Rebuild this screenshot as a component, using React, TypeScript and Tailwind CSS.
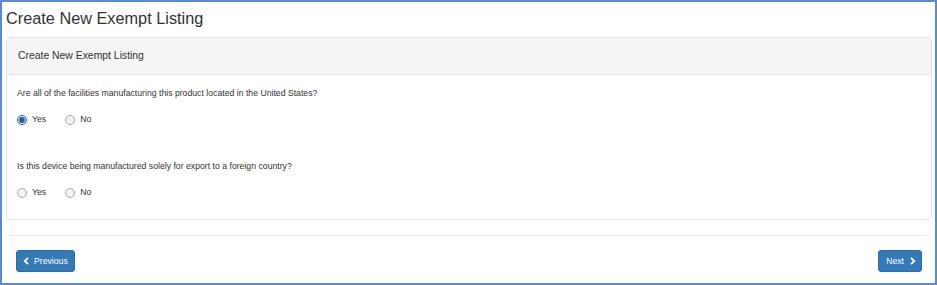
import React, { useState } from 'react';

const font = { fontFamily: '"Liberation Sans", Arial, sans-serif' };

function Radio({ checked, label, onClick }: { checked: boolean; label: string; onClick: () => void }) {
  return (
    <label className="flex items-center gap-[5px] cursor-pointer" onClick={onClick}>
      <span
        className={`flex h-[10px] w-[10px] items-center justify-center rounded-full border ${
          checked ? 'border-[#2f5f9a] bg-[#dfe9f5]' : 'border-[#a8a8a8] bg-[#f2f2f2]'
        }`}
      >
        {checked && <span className="h-[6px] w-[6px] rounded-full bg-[#2e5f9e]" />}
      </span>
      <span className="text-[8.7px] text-[#333]">{label}</span>
    </label>
  );
}

function Question({
  text,
  value,
  onChange,
}: {
  text: string;
  value: string | null;
  onChange: (v: string) => void;
}) {
  return (
    <div>
      <p className="text-[8.7px] leading-[12px] text-[#333]">{text}</p>
      <div className="mt-[14px] flex items-center gap-[19px]">
        <Radio checked={value === 'yes'} label="Yes" onClick={() => onChange('yes')} />
        <Radio checked={value === 'no'} label="No" onClick={() => onChange('no')} />
      </div>
    </div>
  );
}

function Chevron({ dir }: { dir: 'left' | 'right' }) {
  return (
    <svg width="7" height="8" viewBox="0 0 7 8" className="shrink-0">
      <path
        d={dir === 'left' ? 'M5 0.8 L1.8 4 L5 7.2' : 'M2 0.8 L5.2 4 L2 7.2'}
        fill="none"
        stroke="white"
        strokeWidth="1.9"
      />
    </svg>
  );
}

export default function App() {
  const [q1, setQ1] = useState<string | null>('yes');
  const [q2, setQ2] = useState<string | null>(null);

  return (
    <div
      className="h-[285px] w-[937px] overflow-hidden border-2 border-[#5a8ad2] bg-white"
      style={font}
    >
      <h3 className="pl-[4px] pt-[6px] text-[16.3px] leading-[20px] text-[#333]">Create New Exempt Listing</h3>

      <div className="ml-[4px] mr-[3px] mt-[9px] rounded-[3px] border border-[#e2e2e2]">
        <div className="flex h-[37px] items-center border-b border-[#e2e2e2] bg-[#f5f5f5] pl-[11px]">
          <span className="text-[10.4px] text-[#333]">Create New Exempt Listing</span>
        </div>
        <div className="px-[10px] pb-[20px] pt-[12px]">
          <Question
            text="Are all of the facilities manufacturing this product located in the United States?"
            value={q1}
            onChange={setQ1}
          />
          <div className="mt-[34px]">
            <Question
              text="Is this device being manufactured solely for export to a foreign country?"
              value={q2}
              onChange={setQ2}
            />
          </div>
        </div>
      </div>

      <div className="mx-[4px] mt-[15px] border-t border-[#eeeeee]" />

      <div className="flex justify-between pl-[14px] pr-[13px] pt-[14px]">
        <button className="flex h-[22px] items-center gap-[4px] rounded-[3px] border border-[#2e6da4] bg-[#337ab7] pl-[6px] pr-[6px] text-[8.7px] text-white">
          <Chevron dir="left" />
          Previous
        </button>
        <button className="flex h-[22px] items-center gap-[5px] rounded-[3px] border border-[#2e6da4] bg-[#337ab7] pl-[7px] pr-[5px] text-[8.7px] text-white">
          Next
          <Chevron dir="right" />
        </button>
      </div>
    </div>
  );
}
